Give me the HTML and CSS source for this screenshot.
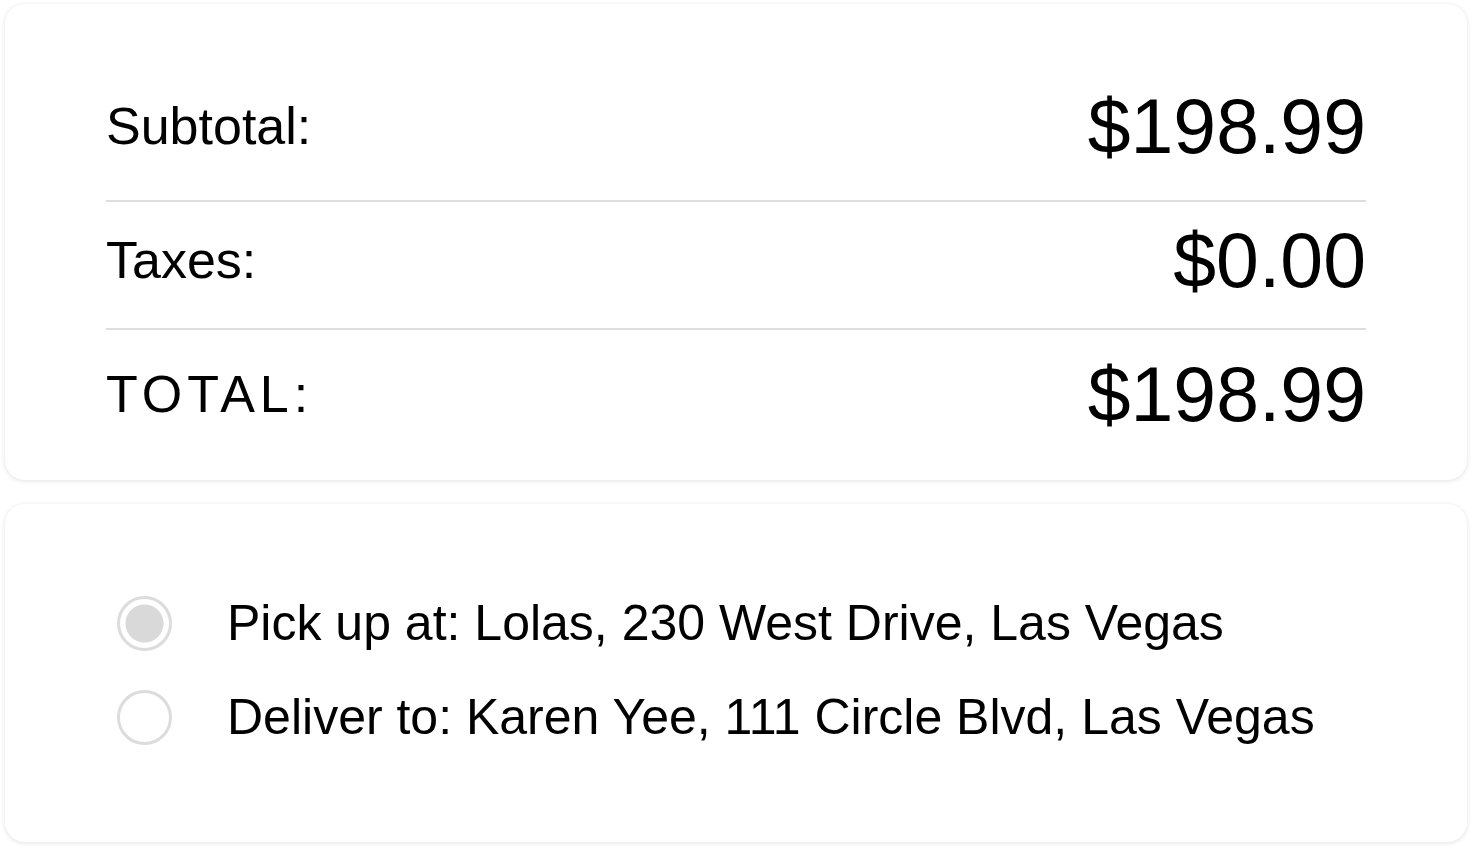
FILE: index.html
```html
<!DOCTYPE html>
<html lang="en">
<head>
<meta charset="utf-8">
<title>Order summary</title>
<link rel="stylesheet" href="styles.css">
</head>
<body>
  <section class="card summary">
    <div class="row subtotal">
      <span class="label">Subtotal:</span>
      <span class="amount">$198.99</span>
    </div>
    <div class="row">
      <span class="label">Taxes:</span>
      <span class="amount">$0.00</span>
    </div>
    <div class="row total">
      <span class="label caps">TOTAL:</span>
      <span class="amount">$198.99</span>
    </div>
  </section>
  <section class="card options">
    <label class="option">
      <input type="radio" name="fulfil" class="radio" checked>
      <span class="option-text">Pick up at: Lolas, 230 West Drive, Las Vegas</span>
    </label>
    <label class="option">
      <input type="radio" name="fulfil" class="radio">
      <span class="option-text">Deliver to: Karen Yee, 111 Circle Blvd, Las Vegas</span>
    </label>
  </section>
</body>
</html>
```
FILE: styles.css
```css
html, body {
  margin: 0;
  background: #ffffff;
}
body {
  padding: 4px 5px;
  font-family: "Liberation Sans", Arial, Helvetica, sans-serif;
  color: #000;
  display: flex;
  flex-direction: column;
  gap: 24px;
}
.card {
  background: #fff;
  border-radius: 20px;
  box-shadow: 0 1px 5px rgba(0, 0, 0, 0.12);
}
.summary {
  padding: 70px 101px 24px;
}
.row {
  display: flex;
  align-items: center;
  justify-content: space-between;
  padding: 13px 0 23px;
  border-bottom: 2px solid #dedede;
}
.row.subtotal {
  padding: 7px 0 29px;
}
.row.total {
  border-bottom: none;
  padding: 19px 0 17px;
}
.label {
  font-size: 52px;
  line-height: 60px;
}
.caps {
  letter-spacing: 5px;
}
.amount {
  font-size: 77px;
  line-height: 90px;
}
.options {
  padding: 89px 40px 95px 112px;
  display: flex;
  flex-direction: column;
  gap: 34px;
}
.option {
  display: flex;
  align-items: center;
  gap: 55px;
  cursor: pointer;
}
.radio {
  appearance: none;
  -webkit-appearance: none;
  margin: 0;
  width: 55px;
  height: 55px;
  border: 3px solid #dcdcdc;
  border-radius: 50%;
  background: #fff;
  box-sizing: border-box;
  flex: none;
}
.radio:checked {
  background: radial-gradient(circle, #d9d9d9 0 18.5px, #fff 19.5px);
}
.option-text {
  font-size: 50px;
  line-height: 60px;
}
```
